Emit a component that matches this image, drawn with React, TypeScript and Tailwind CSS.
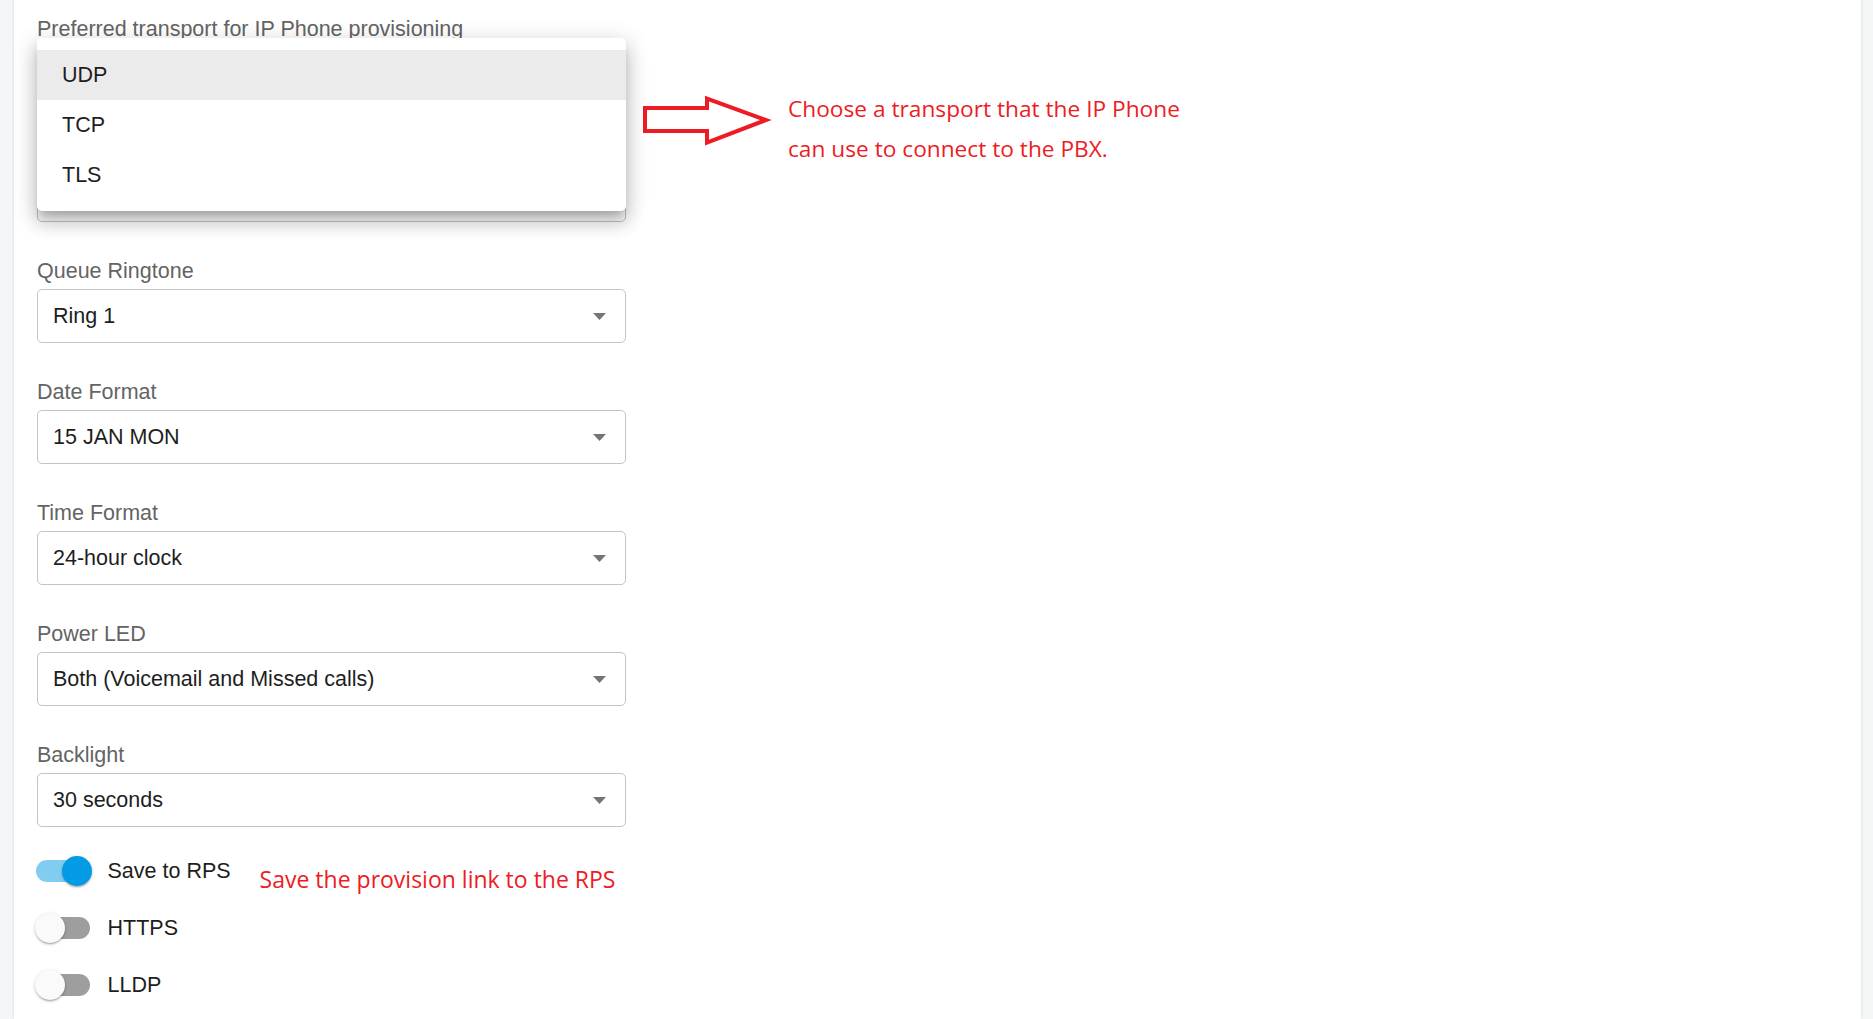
import React from "react";

const FONT = { fontFamily: '"Liberation Sans", Arial, Helvetica, sans-serif' };
const RED_FONT = { fontFamily: '"Open Sans", "Noto Sans", sans-serif' };

function Caret() {
  return (
    <svg width="13" height="7" viewBox="0 0 13 7" className="shrink-0">
      <path d="M0 0 L13 0 L6.5 7 Z" fill="#757575" />
    </svg>
  );
}

function SelectBox({ value }: { value?: string }) {
  return (
    <div className="flex h-[54px] w-full items-center justify-between rounded-[5px] border border-[#c4c4c4] bg-white pl-[15px] pr-[19px]">
      <span className="text-[21.5px] leading-[24px] text-[#1e1e1e]">{value}</span>
      <Caret />
    </div>
  );
}

function Field({ label, value }: { label: string; value: string }) {
  return (
    <div className="mt-[36px] w-[589px]">
      <div className="mb-[5px] h-[26px] text-[21.5px] leading-[26px] text-[#646464]">{label}</div>
      <SelectBox value={value} />
    </div>
  );
}

function Switch({ on }: { on: boolean }) {
  return (
    <div className="relative h-[31px] w-[57px] shrink-0">
      <div
        className={
          on
            ? "absolute left-[1px] top-[4.5px] h-[22px] w-[54px] rounded-full bg-[#81cdf2]"
            : "absolute left-[1px] top-[4.5px] h-[22px] w-[54px] rounded-full bg-[#9e9e9e]"
        }
      />
      <div
        className={
          on
            ? "absolute left-[27px] top-0 h-[30px] w-[30px] rounded-full bg-[#039be5] shadow-[0_2px_2px_-1px_rgba(0,0,0,0.2),0_1px_2px_0_rgba(0,0,0,0.14),0_1px_4px_0_rgba(0,0,0,0.12)]"
            : "absolute left-0 top-0 h-[30px] w-[30px] rounded-full bg-[#fafafa] shadow-[0_2px_2px_-1px_rgba(0,0,0,0.2),0_1px_2px_0_rgba(0,0,0,0.14),0_1px_4px_0_rgba(0,0,0,0.12)]"
        }
      />
    </div>
  );
}

function Arrow() {
  return (
    <svg width="132" height="52" viewBox="0 0 132 52" className="mt-[95px] ml-[15px] shrink-0">
      <polygon
        points="4,13 66,13 66,3.5 125,25 66,47.5 66,36 4,36"
        fill="none"
        stroke="#ed1c24"
        strokeWidth="4"
        strokeLinejoin="miter"
      />
    </svg>
  );
}

export default function App() {
  return (
    <div className="flex h-[1019px] w-full overflow-hidden bg-[#f5f6f8]" style={FONT}>
      <div className="w-[14px] shrink-0" />
      <div className="flex-1 bg-white pl-[23px] shadow-[0_0_3px_rgba(0,0,0,0.14)]">
        <div className="flex items-start">
          <div className="relative w-[589px]">
            <div className="mt-[17px] h-[24px] text-[21.5px] leading-[24px] text-[#646464]">
              Preferred transport for IP Phone provisioning
            </div>
            <div className="mt-[127px]">
              <SelectBox />
            </div>
            <div className="absolute left-0 top-[38px] w-full rounded-[5px] bg-white pt-[12px] pb-[11px] shadow-[0_7px_8px_-4px_rgba(0,0,0,0.2),0_12px_17px_2px_rgba(0,0,0,0.14),0_5px_22px_4px_rgba(0,0,0,0.12)]">
              <div className="flex h-[50px] items-center bg-[#ebebeb] pl-[25px] text-[21.5px] text-[#1e1e1e]">UDP</div>
              <div className="flex h-[50px] items-center pl-[25px] text-[21.5px] text-[#1e1e1e]">TCP</div>
              <div className="flex h-[50px] items-center pl-[25px] text-[21.5px] text-[#1e1e1e]">TLS</div>
            </div>
          </div>
          <Arrow />
          <div className="ml-[15px] mt-[89px] text-[22.7px] leading-[39.5px] text-[#ed1c24]" style={RED_FONT}>
            <div>Choose a transport that the IP Phone</div>
            <div>can use to connect to the PBX.</div>
          </div>
        </div>

        <Field label="Queue Ringtone" value="Ring 1" />
        <Field label="Date Format" value="15 JAN MON" />
        <Field label="Time Format" value="24-hour clock" />
        <Field label="Power LED" value="Both (Voicemail and Missed calls)" />
        <Field label="Backlight" value="30 seconds" />

        <div className="mt-[15.5px] flex flex-col">
          <div className="-ml-[2px] flex h-[57px] items-center">
            <Switch on={true} />
            <span className="ml-[15.5px] text-[21.5px] text-[#1e1e1e]">Save to RPS</span>
            <span className="ml-[29px] pt-[16px] text-[23px] leading-[30px] text-[#ed1c24]" style={RED_FONT}>
              Save the provision link to the RPS
            </span>
          </div>
          <div className="-ml-[2px] flex h-[57px] items-center">
            <Switch on={false} />
            <span className="ml-[15.5px] text-[21.5px] text-[#1e1e1e]">HTTPS</span>
          </div>
          <div className="-ml-[2px] flex h-[57px] items-center">
            <Switch on={false} />
            <span className="ml-[15.5px] text-[21.5px] text-[#1e1e1e]">LLDP</span>
          </div>
        </div>
      </div>
      <div className="w-[12px] shrink-0" />
    </div>
  );
}
